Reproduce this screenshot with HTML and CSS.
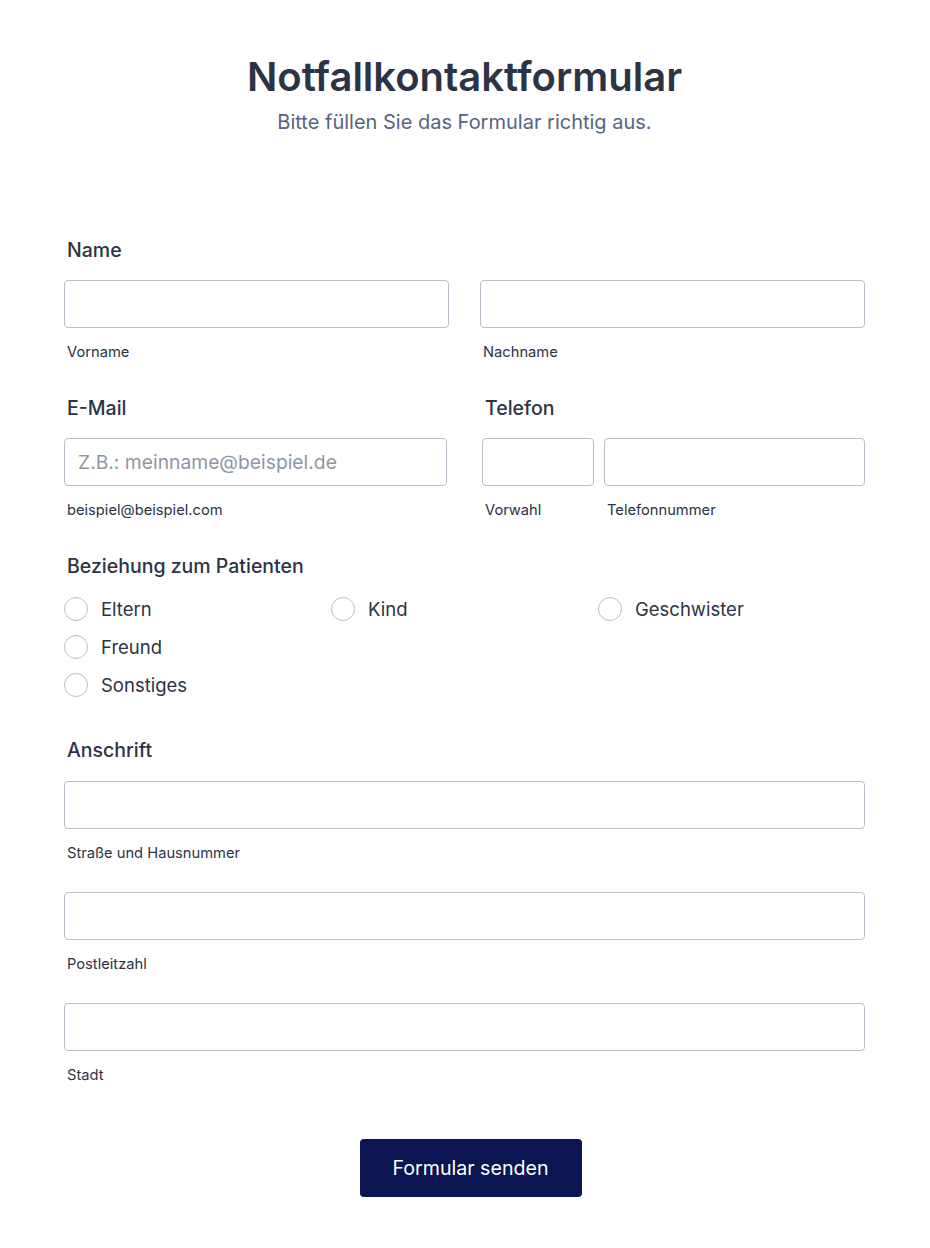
FILE: index.html
```html
<!DOCTYPE html>
<html lang="de">

<head>
    <meta charset="UTF-8">
    <title>Notfallkontaktformular</title>
    <link rel="stylesheet" href="styles.css">
</head>

<body>

    <form class="form" id="contactForm">
        <div class="form-header">
            <h1>Notfallkontaktformular</h1>
            <p>Bitte füllen Sie das Formular richtig aus.</p>
        </div>

        <div class="field">
            <label class="field-label">Name</label>
            <div class="row row-name">
                <div class="col">
                    <input type="text" id="firstName">
                    <span class="sublabel">Vorname</span>
                </div>
                <div class="col">
                    <input type="text" id="lastName">
                    <span class="sublabel">Nachname</span>
                </div>
            </div>
        </div>

        <div class="row row-contact">
            <div class="field col">
                <label class="field-label">E-Mail</label>
                <input type="email" id="email" placeholder="Z.B.: meinname@beispiel.de">
                <span class="sublabel">beispiel@beispiel.com</span>
            </div>
            <div class="field col">
                <label class="field-label">Telefon</label>
                <div class="phone">
                    <div class="phone-area">
                        <input type="tel" id="areaCode">
                        <span class="sublabel">Vorwahl</span>
                    </div>
                    <div class="phone-number">
                        <input type="tel" id="phone">
                        <span class="sublabel">Telefonnummer</span>
                    </div>
                </div>
            </div>
        </div>

        <div class="field field-radio">
            <label class="field-label">Beziehung zum Patienten</label>
            <div class="radio-grid">
                <label class="radio"><input type="radio" name="relation"><span class="circle"></span>Eltern</label>
                <label class="radio"><input type="radio" name="relation"><span class="circle"></span>Kind</label>
                <label class="radio"><input type="radio" name="relation"><span class="circle"></span>Geschwister</label>
                <label class="radio"><input type="radio" name="relation"><span class="circle"></span>Freund</label>
                <label class="radio radio-new-row"><input type="radio" name="relation"><span class="circle"></span>Sonstiges</label>
            </div>
        </div>

        <div class="field field-address">
            <label class="field-label">Anschrift</label>
            <div class="address-line">
                <input type="text" id="street">
                <span class="sublabel">Straße und Hausnummer</span>
            </div>
            <div class="address-line">
                <input type="text" id="zip">
                <span class="sublabel">Postleitzahl</span>
            </div>
            <div class="address-line">
                <input type="text" id="city">
                <span class="sublabel">Stadt</span>
            </div>
        </div>

        <div class="actions">
            <button type="submit">Formular senden</button>
        </div>
    </form>

</body>

</html>
```

FILE: styles.css
```css
body {
    margin: 0;
    background: #ffffff;
    font-family: Inter, "Noto Sans", sans-serif;
    color: #2c3345;
}

.form {
    padding: 0 65px 40px 64px;
}

.form-header {
    text-align: center;
    padding-top: 53px;
    margin-bottom: 104px;
}

.form-header h1 {
    margin: 0;
    font-size: 40px;
    line-height: 48px;
    font-weight: 600;
    color: #2c3345;
}

.form-header p {
    margin: 9px 0 0;
    font-size: 20px;
    line-height: 24px;
    color: #57647e;
}

.field {
    margin-bottom: 34px;
}

.field-label {
    display: block;
    padding-left: 3px;
    margin-bottom: 18px;
    font-size: 19.5px;
    line-height: 24px;
    font-weight: 500;
}

.row {
    display: flex;
}

.row-name {
    gap: 31px;
}

.row-contact {
    gap: 35px;
}

.col {
    flex: 1;
    min-width: 0;
}

input[type="text"],
input[type="email"],
input[type="tel"] {
    display: block;
    width: 100%;
    height: 48px;
    box-sizing: border-box;
    padding: 0 13px;
    border: 1px solid #b8bdc9;
    border-radius: 4px;
    font-family: inherit;
    font-size: 19.3px;
    color: #2c3345;
    background: #fff;
}

input::placeholder {
    color: #8f96a3;
}

.sublabel {
    display: block;
    padding-left: 3px;
    margin-top: 14px;
    font-size: 14.7px;
    line-height: 20px;
    color: #2c3345;
}

.phone {
    display: flex;
    gap: 10px;
}

.phone-area {
    width: 112px;
}

.phone-number {
    flex: 1;
}

.field-radio .field-label {
    margin-bottom: 12px;
}

.field-radio {
    margin-bottom: 34px;
}

.radio-grid {
    display: grid;
    grid-template-columns: repeat(3, 1fr);
}

.radio {
    display: flex;
    align-items: center;
    height: 38px;
    font-size: 18.5px;
    color: #2c3345;
    cursor: pointer;
}

.radio-new-row {
    grid-column: 1;
}

.radio input {
    display: none;
}

.circle {
    width: 24px;
    height: 24px;
    box-sizing: border-box;
    border: 1.5px solid #b8bdc9;
    border-radius: 50%;
    margin-right: 13px;
    flex-shrink: 0;
}

.field-address .field-label {
    margin-bottom: 19px;
}

.address-line {
    margin-bottom: 29px;
}

.address-line:last-child {
    margin-bottom: 0;
}

.field-address {
    margin-bottom: 54px;
}

.actions {
    text-align: center;
    padding-left: 12px;
}

button {
    width: 222px;
    height: 58px;
    background-color: #0a1551;
    color: #ffffff;
    border: none;
    border-radius: 4px;
    font-family: inherit;
    font-size: 19.6px;
    cursor: pointer;
}

button:hover {
    background-color: #1d2a6b;
}
```
